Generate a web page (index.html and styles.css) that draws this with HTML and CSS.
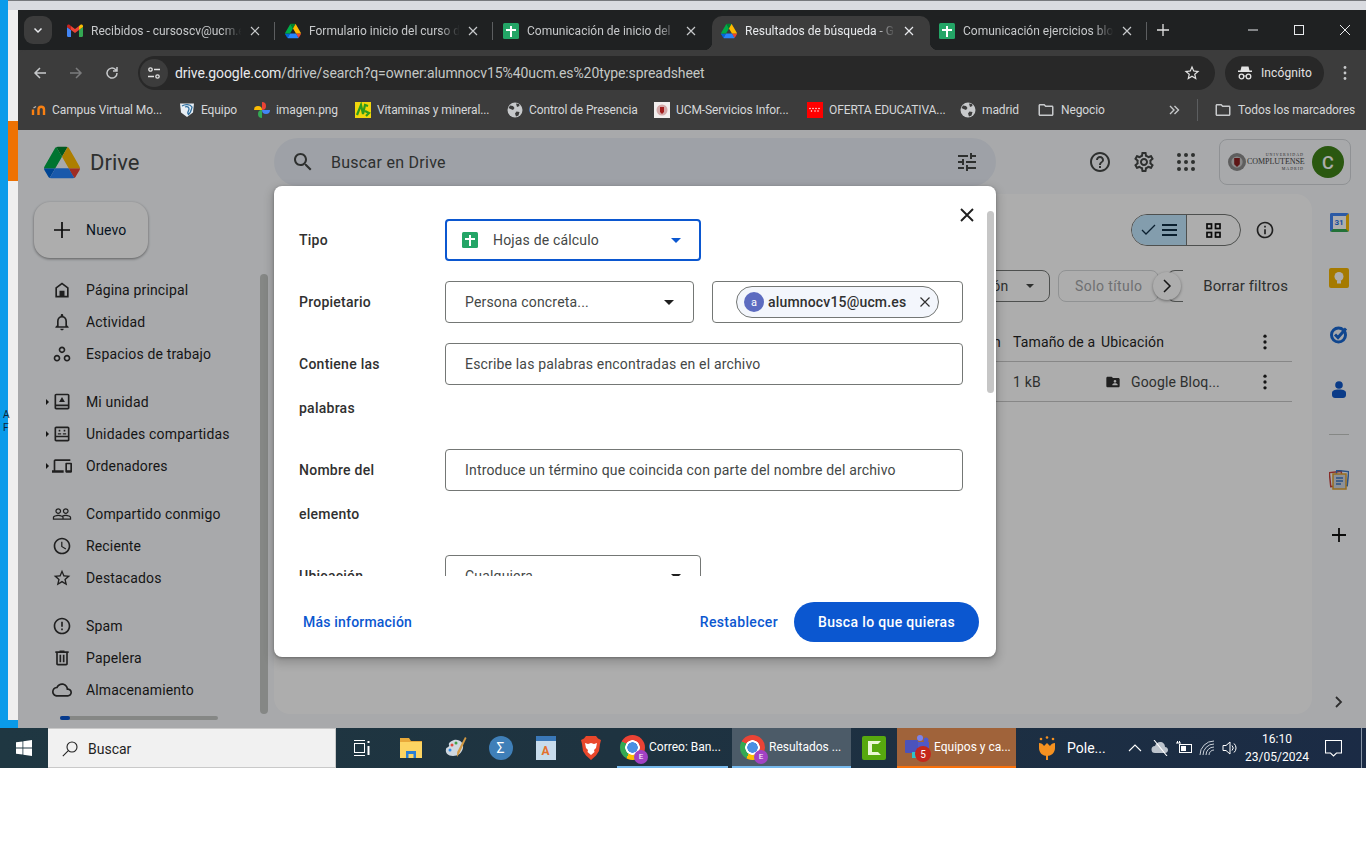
FILE: index.html
```html
<!DOCTYPE html>
<html lang="es">
<head>
    <meta charset="UTF-8">
    <title>Resultados de búsqueda - Google Drive</title>
    <link rel="stylesheet" href="styles.css">
</head>
<body>
    <svg class="defs" width="0" height="0">
        <defs>
            <symbol id="drive" viewBox="0 0 87.3 78">
                <path fill="#0066da" d="m6.6 66.85 3.85 6.65c.8 1.4 1.95 2.5 3.3 3.3l13.75-23.8h-27.5c0 1.55.4 3.1 1.2 4.5z"/>
                <path fill="#00ac47" d="m43.65 25-13.75-23.8c-1.35.8-2.5 1.9-3.3 3.3l-25.4 44a9.06 9.06 0 0 0 -1.2 4.5h27.5z"/>
                <path fill="#ea4335" d="m73.55 76.8c1.35-.8 2.5-1.9 3.3-3.3l1.6-2.75 7.65-13.25c.8-1.4 1.2-2.95 1.2-4.5h-27.502l5.852 11.5z"/>
                <path fill="#00832d" d="m43.65 25 13.75-23.8c-1.35-.8-2.9-1.2-4.5-1.2h-18.5c-1.6 0-3.15.45-4.5 1.2z"/>
                <path fill="#2684fc" d="m59.8 53h-32.3l-13.75 23.8c1.35.8 2.9 1.2 4.5 1.2h50.8c1.6 0 3.15-.45 4.5-1.2z"/>
                <path fill="#ffba00" d="m73.4 26.5-12.7-22c-.8-1.4-1.95-2.5-3.3-3.3l-13.75 23.8 16.15 28h27.45c0-1.55-.4-3.1-1.2-4.5z"/>
            </symbol>
            <symbol id="sheets" viewBox="0 0 16 16">
                <rect width="16" height="16" rx="1.5" fill="#23a566"/>
                <path fill="#fff" d="M7 3h2v3h4v2H9v6H7V8H3V6h4z"/>
            </symbol>
            <symbol id="gmail" viewBox="0 0 16 16">
                <path fill="#4285f4" d="M1 14h3V7L0 4v8.8C0 13.5.5 14 1 14z"/>
                <path fill="#34a853" d="M12 14h3c.5 0 1-.5 1-1.2V4l-4 3z"/>
                <path fill="#ea4335" d="M4 7V3l4 3 4-3v4L8 10z"/>
                <path fill="#fbbc04" d="M12 3v4l4-3V3c0-1.3-1.5-2-2.5-1.2z"/>
                <path fill="#c5221f" d="M0 4l4 3V3L2.5 1.8C1.500 1 0 1.700 0 3z"/>
            </symbol>
            <symbol id="folder" viewBox="0 0 24 24">
                <path fill="currentColor" d="M20 6h-8l-2-2H4c-1.1 0-2 .9-2 2v12c0 1.1.9 2 2 2h16c1.1 0 2-.9 2-2V8c0-1.1-.9-2-2-2zm0 12H4V6h5.17l2 2H20v10z"/>
            </symbol>
            <symbol id="globe" viewBox="0 0 16 16">
                <circle cx="8" cy="8" r="7.5" fill="#c7c9cb"/>
                <path fill="#3c3c3c" d="M3 3.5l3 .5 1.5 2L6 8 3.5 7 1.5 6zM9.5 9.500l3 .5-1 3.5L9 14.5l-1-3zM9 1.5l3 .5.5 2L10 5z"/>
            </symbol>
            <symbol id="tabx" viewBox="0 0 10 10">
                <path d="M1 1l8 8M9 1 1 9" stroke="currentColor" stroke-width="1.2"/>
            </symbol>
        </defs>
    </svg>

    <div class="screen">
        <div class="desktop">
            <div class="peek-window"><div class="peek-orange"></div></div>
            <div class="peek-top"></div>
            <div class="peek-text">A<br>F</div>

            <div class="browser">
                <div class="tabstrip">
                    <div class="tab-menu">
                        <svg width="12" height="12" viewBox="0 0 12 12"><path d="M2.5 4.5 6 8l3.5-3.5" fill="none" stroke="#e8eaed" stroke-width="1.5"/></svg>
                    </div>
                    <div class="tab sep">
                        <svg class="fav" viewBox="0 0 16 16"><use href="#gmail"/></svg>
                        <span class="tab-title">Recibidos - cursoscv@ucm.e</span>
                        <svg class="tab-x" viewBox="0 0 10 10"><use href="#tabx"/></svg>
                    </div>
                    <div class="tab sep">
                        <svg class="fav" viewBox="0 0 16 16"><use href="#drive"/></svg>
                        <span class="tab-title">Formulario inicio del curso d</span>
                        <svg class="tab-x" viewBox="0 0 10 10"><use href="#tabx"/></svg>
                    </div>
                    <div class="tab">
                        <svg class="fav" viewBox="0 0 16 16"><use href="#sheets"/></svg>
                        <span class="tab-title">Comunicación de inicio del</span>
                        <svg class="tab-x" viewBox="0 0 10 10"><use href="#tabx"/></svg>
                    </div>
                    <div class="tab active">
                        <svg class="fav" viewBox="0 0 16 16"><use href="#drive"/></svg>
                        <span class="tab-title">Resultados de búsqueda - G</span>
                        <svg class="tab-x" viewBox="0 0 10 10"><use href="#tabx"/></svg>
                    </div>
                    <div class="tab sep">
                        <svg class="fav" viewBox="0 0 16 16"><use href="#sheets"/></svg>
                        <span class="tab-title">Comunicación ejercicios blo</span>
                        <svg class="tab-x" viewBox="0 0 10 10"><use href="#tabx"/></svg>
                    </div>
                    <div class="tab-new">
                        <svg width="12" height="12" viewBox="0 0 12 12"><path d="M6 0v12M0 6h12" stroke="#e3e3e3" stroke-width="1.3"/></svg>
                    </div>
                    <div class="win-controls">
                        <div class="win-btn"><svg width="12" height="12" viewBox="0 0 12 12"><path d="M1 6h10" stroke="#e8eaed"/></svg></div>
                        <div class="win-btn"><svg width="12" height="12" viewBox="0 0 12 12"><rect x="1.5" y="1.5" width="9" height="9" fill="none" stroke="#e8eaed"/></svg></div>
                        <div class="win-btn"><svg width="12" height="12" viewBox="0 0 12 12"><path d="M1 1l10 10M11 1 1 11" stroke="#e8eaed"/></svg></div>
                    </div>
                </div>

                <div class="toolbar">
                    <div class="tool-btn"><svg width="16" height="16" viewBox="0 0 16 16"><path d="M14 8H3M8 3 3 8l5 5" fill="none" stroke="#c7c9cb" stroke-width="1.5"/></svg></div>
                    <div class="tool-btn"><svg width="16" height="16" viewBox="0 0 16 16"><path d="M2 8h11M8 3l5 5-5 5" fill="none" stroke="#7b7c7d" stroke-width="1.5"/></svg></div>
                    <div class="tool-btn"><svg width="16" height="16" viewBox="0 0 16 16"><path d="M13 8a5 5 0 1 1-1.5-3.500L13 6M13 2v4H9" fill="none" stroke="#c7c9cb" stroke-width="1.5"/></svg></div>
                    <div class="omnibox">
                        <div class="site-info">
                            <svg width="16" height="16" viewBox="0 0 16 16" fill="none" stroke="#e3e3e3" stroke-width="1.3"><circle cx="4.5" cy="4.5" r="1.7"/><path d="M8 4.5h6M2 11.5h6"/><circle cx="11.5" cy="11.5" r="1.7"/></svg>
                        </div>
                        <div class="url"><span class="url-host">drive.google.com</span>/drive/search?q=owner:alumnocv15%40ucm.es%20type:spreadsheet</div>
                        <svg class="url-star" width="18" height="18" viewBox="0 0 24 24"><path fill="#e3e3e3" d="M22 9.24l-7.19-.62L12 2 9.19 8.63 2 9.24l5.46 4.73L5.82 21 12 17.27 18.18 21l-1.63-7.03L22 9.24zM12 15.4l-3.76 2.27 1-4.28-3.32-2.88 4.38-.38L12 6.1l1.71 4.04 4.38.38-3.32 2.88 1 4.28L12 15.4z"/></svg>
                    </div>
                    <div class="incognito">
                        <svg width="16" height="16" viewBox="0 0 16 16"><path fill="#e3e3e3" d="M4.500 1.500h7l1 4H15V7H1V5.500h2.500z"/><circle cx="4.500" cy="11.500" r="2.300" fill="none" stroke="#e3e3e3" stroke-width="1.300"/><circle cx="11.500" cy="11.500" r="2.300" fill="none" stroke="#e3e3e3" stroke-width="1.300"/><path d="M6.800 11h2.400" stroke="#e3e3e3"/></svg>
                        <span>Incógnito</span>
                    </div>
                    <div class="tool-kebab">
                        <svg width="16" height="16" viewBox="0 0 16 16" fill="#c7c9cb"><circle cx="8" cy="2.500" r="1.400"/><circle cx="8" cy="8" r="1.400"/><circle cx="8" cy="13.500" r="1.400"/></svg>
                    </div>
                </div>

                <div class="bookmarks">
                    <div class="bm bm-campus">
                        <svg class="fav" viewBox="0 0 16 16"><path d="M2 13V7.500M7.500 13V7.500a2.700 2.700 0 0 1 5.500 0V13" fill="none" stroke="#f98012" stroke-width="2.400"/><path d="M2.500 6 5 4.500" stroke="#b8b8b8" stroke-width="1.400"/></svg>
                        <span>Campus Virtual Mo...</span>
                    </div>
                    <div class="bm bm-equipo">
                        <svg class="fav" viewBox="0 0 16 16"><path d="M1 1.500h14l-1 9-6 4.500-6-4.500z" fill="#e8eef4"/><path d="M3 4c3-2 8-2 10 1-1 4-1 6-4 8M6 5c2-1 4 0 4 2s-2 3-1 5" fill="none" stroke="#2f6f9f" stroke-width="1.300"/></svg>
                        <span>Equipo</span>
                    </div>
                    <div class="bm bm-imagen">
                        <svg class="fav" viewBox="0 0 16 16"><path fill="#fbbc04" d="M8 8H0a4 4 0 0 1 8 0z"/><path fill="#ea4335" d="M8 8V0a4 4 0 0 1 0 8z"/><path fill="#4285f4" d="M8 8h8a4 4 0 0 1-8 0z"/><path fill="#34a853" d="M8 8v8a4 4 0 0 1 0-8z"/></svg>
                        <span>imagen.png</span>
                    </div>
                    <div class="bm bm-vitaminas">
                        <svg class="fav" viewBox="0 0 16 16"><rect width="16" height="16" fill="#f2d70c"/><path d="M2 13 6 3l2 9 2-9 3 1M10 9l4 2-3 3" fill="none" stroke="#2f9a1c" stroke-width="2.200"/></svg>
                        <span>Vitaminas y mineral...</span>
                    </div>
                    <div class="bm bm-control">
                        <svg class="fav" viewBox="0 0 16 16"><use href="#globe"/></svg>
                        <span>Control de Presencia</span>
                    </div>
                    <div class="bm bm-ucm">
                        <svg class="fav" viewBox="0 0 16 16"><rect width="16" height="16" fill="#f3efee"/><circle cx="8" cy="8" r="5.500" fill="#d4a9a9"/><path d="M6 5h4v5l-2 2-2-2z" fill="#a31d1d"/></svg>
                        <span>UCM-Servicios Infor...</span>
                    </div>
                    <div class="bm bm-oferta">
                        <svg class="fav" viewBox="0 0 16 16"><rect width="16" height="16" fill="#f00"/><path d="M3 6.500h.01M6 6.500h.01M9 6.500h.01M12 6.500h.01M4.500 9h.01M8 9h.01M11 9h.01" stroke="#fff" stroke-width="1.500" stroke-linecap="round"/></svg>
                        <span>OFERTA EDUCATIVA...</span>
                    </div>
                    <div class="bm bm-madrid">
                        <svg class="fav" viewBox="0 0 16 16"><use href="#globe"/></svg>
                        <span>madrid</span>
                    </div>
                    <div class="bm bm-negocio">
                        <svg class="fav folder-ico" viewBox="0 0 24 24"><use href="#folder"/></svg>
                        <span>Negocio</span>
                    </div>
                    <div class="bm-more">
                        <svg width="12" height="12" viewBox="0 0 12 12"><path d="M2 2l4 4-4 4M6.500 2l4 4-4 4" fill="none" stroke="#c7c9cb" stroke-width="1.400"/></svg>
                    </div>
                    <div class="bm-sep"></div>
                    <div class="bm bm-all">
                        <svg class="fav folder-ico" viewBox="0 0 24 24"><use href="#folder"/></svg>
                        <span>Todos los marcadores</span>
                    </div>
                </div>

                <div class="drive">
                    <header class="drive-head">
                        <div class="brand">
                            <svg class="brand-logo" viewBox="0 0 87.3 78"><use href="#drive"/></svg>
                            <span>Drive</span>
                        </div>
                        <div class="searchbox">
                            <svg class="ico24" viewBox="0 0 24 24"><path d="M15.5 14h-.79l-.28-.27C15.41 12.59 16 11.11 16 9.5 16 5.91 13.09 3 9.5 3S3 5.91 3 9.5 5.91 16 9.5 16c1.61 0 3.09-.59 4.23-1.57l.27.28v.79l5 4.99L20.49 19l-4.99-5zm-6 0C7.01 14 5 11.99 5 9.5S7.01 5 9.5 5 14 7.01 14 9.5 11.99 14 9.5 14z"/></svg>
                            <span class="search-text">Buscar en Drive</span>
                            <svg class="ico24" viewBox="0 0 24 24"><path d="M3 17v2h6v-2H3zM3 5v2h10V5H3zm10 16v-2h8v-2h-8v-2h-2v6h2zM7 9v2H3v2h4v2h2V9H7zm14 4v-2H11v2h10zm-6-4h2V7h4V5h-4V3h-2v6z"/></svg>
                        </div>
                        <div class="head-actions">
                            <svg class="ico24" viewBox="0 0 24 24"><path d="M11 18h2v-2h-2v2zm1-16C6.48 2 2 6.48 2 12s4.48 10 10 10 10-4.48 10-10S17.52 2 12 2zm0 18c-4.41 0-8-3.59-8-8s3.59-8 8-8 8 3.59 8 8-3.59 8-8 8zm0-14c-2.21 0-4 1.79-4 4h2c0-1.1.9-2 2-2s2 .9 2 2c0 2-3 1.75-3 5h2c0-2.25 3-2.5 3-5 0-2.21-1.79-4-4-4z"/></svg>
                            <svg class="ico24" viewBox="0 0 24 24"><path d="M19.43 12.98c.04-.32.07-.64.07-.98 0-.34-.03-.66-.07-.98l2.11-1.65c.19-.15.24-.42.12-.64l-2-3.46c-.09-.16-.26-.25-.44-.25-.06 0-.12.01-.17.03l-2.49 1c-.52-.4-1.08-.73-1.69-.98l-.38-2.65C14.46 2.18 14.25 2 14 2h-4c-.25 0-.46.18-.49.42l-.38 2.65c-.61.25-1.17.59-1.69.98l-2.49-1c-.06-.02-.12-.03-.18-.03-.17 0-.34.09-.43.25l-2 3.46c-.13.22-.07.49.12.64l2.11 1.65c-.04.32-.07.65-.07.98 0 .33.03.66.07.98l-2.11 1.65c-.19.15-.24.42-.12.64l2 3.46c.09.16.26.25.44.25.06 0 .12-.01.17-.03l2.49-1c.52.4 1.08.73 1.69.98l.38 2.65c.03.24.24.42.49.42h4c.25 0 .46-.18.49-.42l.38-2.65c.61-.25 1.17-.59 1.69-.98l2.49 1c.06.02.12.03.18.03.17 0 .34-.09.43-.25l2-3.46c.12-.22.07-.49-.12-.64l-2.11-1.65zm-1.98-1.71c.04.31.05.52.05.73 0 .21-.02.43-.05.73l-.14 1.13.89.7 1.08.84-.7 1.21-1.27-.51-1.04-.42-.9.68c-.43.32-.84.56-1.25.73l-1.06.43-.16 1.13-.2 1.35h-1.4l-.19-1.35-.16-1.13-1.06-.43c-.43-.18-.83-.41-1.23-.71l-.91-.7-1.06.43-1.27.51-.7-1.21 1.08-.84.89-.7-.14-1.13c-.03-.31-.05-.54-.05-.74s.02-.43.05-.73l.14-1.13-.89-.7-1.08-.84.7-1.21 1.27.51 1.04.42.9-.68c.43-.32.84-.56 1.25-.73l1.06-.43.16-1.13.2-1.35h1.39l.19 1.35.16 1.13 1.06.43c.43.18.83.41 1.23.71l.91.7 1.06-.43 1.27-.51.7 1.21-1.07.85-.89.7.14 1.13zM12 8c-2.21 0-4 1.79-4 4s1.79 4 4 4 4-1.79 4-4-1.79-4-4-4zm0 6c-1.1 0-2-.9-2-2s.9-2 2-2 2 .9 2 2-.9 2-2 2z"/></svg>
                            <svg class="ico24 ico-apps" viewBox="0 0 24 24"><circle cx="5" cy="5" r="2"/><circle cx="12" cy="5" r="2"/><circle cx="19" cy="5" r="2"/><circle cx="5" cy="12" r="2"/><circle cx="12" cy="12" r="2"/><circle cx="19" cy="12" r="2"/><circle cx="5" cy="19" r="2"/><circle cx="12" cy="19" r="2"/><circle cx="19" cy="19" r="2"/></svg>
                            <div class="org-box">
                                <svg class="crest" viewBox="0 0 16 16"><circle cx="8" cy="8" r="8" fill="#8b8b8b"/><circle cx="8" cy="8" r="5" fill="#c9c9c9"/><path d="M5.500 4.500h5V10L8 12.500 5.500 10z" fill="#8a1f1f"/></svg>
                                <div class="org-name">
                                    <span class="org-small">UNIVERSIDAD</span>
                                    <span class="org-big">COMPLUTENSE</span>
                                    <span class="org-small">MADRID</span>
                                </div>
                                <div class="avatar">C</div>
                            </div>
                        </div>
                    </header>

                    <div class="drive-body">
                        <aside class="sidebar">
                            <div class="new-btn">
                                <svg width="16" height="16" viewBox="0 0 16 16"><path d="M8 0v16M0 8h16" stroke="#111" stroke-width="1.700"/></svg>
                                <span>Nuevo</span>
                            </div>
                            <nav class="nav-group">
                                <div class="nav-row"><svg class="ico20" viewBox="0 0 24 24"><path d="M12 3 4 9v12h16V9l-8-6zm6 16h-3v-6H9v6H6v-9.1l6-4.5 6 4.5V19z"/></svg><span>Página principal</span></div>
                                <div class="nav-row"><svg class="ico20" viewBox="0 0 24 24"><path d="M12 22c1.1 0 2-.9 2-2h-4c0 1.1.9 2 2 2zm6-6v-5c0-3.07-1.63-5.64-4.5-6.32V4c0-.83-.67-1.5-1.5-1.5s-1.5.67-1.5 1.5v.68C7.64 5.36 6 7.92 6 11v5l-2 2v1h16v-1l-2-2zm-2 1H8v-6c0-2.48 1.51-4.5 4-4.5s4 2.02 4 4.5v6z"/></svg><span>Actividad</span></div>
                                <div class="nav-row"><svg class="ico20" viewBox="0 0 24 24"><path d="M6 13c-2.2 0-4 1.8-4 4s1.8 4 4 4 4-1.8 4-4-1.8-4-4-4zm0 6c-1.1 0-2-.9-2-2s.9-2 2-2 2 .9 2 2-.9 2-2 2zm6-16C9.8 3 8 4.8 8 7s1.8 4 4 4 4-1.8 4-4-1.8-4-4-4zm0 6c-1.1 0-2-.9-2-2s.9-2 2-2 2 .9 2 2-.9 2-2 2zm6 4c-2.2 0-4 1.8-4 4s1.8 4 4 4 4-1.8 4-4-1.8-4-4-4zm0 6c-1.1 0-2-.9-2-2s.9-2 2-2 2 .9 2 2-.9 2-2 2z"/></svg><span>Espacios de trabajo</span></div>
                            </nav>
                            <nav class="nav-group">
                                <div class="nav-row"><i class="caret-r"></i><svg class="ico20" viewBox="0 0 24 24"><path d="M5 2h14c1.1 0 2 .9 2 2v15c0 1.1-.9 2-2 2H5c-1.1 0-2-.9-2-2V4c0-1.1.9-2 2-2zm0 2v11h14V4H5zm0 13v2h14v-2H5zm7-11 3.5 6h-7z"/></svg><span>Mi unidad</span></div>
                                <div class="nav-row"><i class="caret-r"></i><svg class="ico20" viewBox="0 0 24 24"><path d="M5 3h14c1.1 0 2 .9 2 2v14c0 1.1-.9 2-2 2H5c-1.1 0-2-.9-2-2V5c0-1.1.9-2 2-2zm0 2v9h14V5H5zm0 11v3h14v-3H5zM8 7h2v2H8zm6 0h2v2h-2zm-7 4h4v1.5H7zm6 0h4v1.5h-4z"/></svg><span>Unidades compartidas</span></div>
                                <div class="nav-row"><i class="caret-r"></i><svg class="ico20" viewBox="0 0 24 24"><path d="M4 6h18V4H4c-1.1 0-2 .9-2 2v11H0v3h14v-3H4V6zm19 2h-6c-.55 0-1 .45-1 1v10c0 .55.45 1 1 1h6c.55 0 1-.45 1-1V9c0-.55-.45-1-1-1zm-1 9h-4v-7h4v7z"/></svg><span>Ordenadores</span></div>
                            </nav>
                            <nav class="nav-group">
                                <div class="nav-row"><svg class="ico20" viewBox="0 0 24 24"><path d="M16.5 13c-1.2 0-3.07.34-4.5 1-1.43-.67-3.3-1-4.5-1C5.33 13 1 14.08 1 16.25V19h22v-2.75c0-2.17-4.33-3.25-6.5-3.25zm-4 4.5h-10v-1.25c0-.54 2.56-1.75 5-1.75s5 1.21 5 1.75v1.25zm9 0H14v-1.25c0-.46-.2-.86-.52-1.22.88-.3 1.96-.53 3.02-.53 2.44 0 5 1.21 5 1.75v1.25zM7.5 12c1.93 0 3.5-1.57 3.5-3.5S9.43 5 7.5 5 4 6.57 4 8.5 5.57 12 7.5 12zm0-5.5c1.1 0 2 .9 2 2s-.9 2-2 2-2-.9-2-2 .9-2 2-2zm9 5.5c1.93 0 3.5-1.57 3.5-3.5S18.43 5 16.5 5 13 6.57 13 8.5s1.57 3.5 3.5 3.5zm0-5.5c1.1 0 2 .9 2 2s-.9 2-2 2-2-.9-2-2 .9-2 2-2z"/></svg><span>Compartido conmigo</span></div>
                                <div class="nav-row"><svg class="ico20" viewBox="0 0 24 24"><path d="M11.99 2C6.47 2 2 6.48 2 12s4.47 10 9.99 10C17.52 22 22 17.52 22 12S17.52 2 11.99 2zM12 20c-4.42 0-8-3.58-8-8s3.58-8 8-8 8 3.58 8 8-3.58 8-8 8zm.5-13H11v6l5.25 3.15.75-1.23-4.5-2.67z"/></svg><span>Reciente</span></div>
                                <div class="nav-row"><svg class="ico20" viewBox="0 0 24 24"><path d="M22 9.24l-7.19-.62L12 2 9.19 8.63 2 9.24l5.46 4.73L5.82 21 12 17.27 18.18 21l-1.63-7.03L22 9.24zM12 15.4l-3.76 2.27 1-4.28-3.32-2.88 4.38-.38L12 6.1l1.71 4.04 4.38.38-3.32 2.88 1 4.28L12 15.4z"/></svg><span>Destacados</span></div>
                            </nav>
                            <nav class="nav-group">
                                <div class="nav-row"><svg class="ico20" viewBox="0 0 24 24"><path d="M11 15h2v2h-2zm0-8h2v6h-2zm.99-5C6.47 2 2 6.48 2 12s4.47 10 9.99 10C17.52 22 22 17.52 22 12S17.52 2 11.99 2zM12 20c-4.42 0-8-3.58-8-8s3.58-8 8-8 8 3.58 8 8-3.58 8-8 8z"/></svg><span>Spam</span></div>
                                <div class="nav-row"><svg class="ico20" viewBox="0 0 24 24"><path d="M15 4V3H9v1H4v2h1v13c0 1.1.9 2 2 2h10c1.1 0 2-.9 2-2V6h1V4h-5zm2 15H7V6h10v13zM9 8h2v9H9zm4 0h2v9h-2z"/></svg><span>Papelera</span></div>
                                <div class="nav-row"><svg class="ico20" viewBox="0 0 24 24"><path d="M19.35 10.04C18.67 6.59 15.64 4 12 4 9.11 4 6.6 5.64 5.35 8.04 2.34 8.36 0 10.91 0 14c0 3.31 2.69 6 6 6h13c2.76 0 5-2.24 5-5 0-2.64-2.05-4.78-4.65-4.96zM19 18H6c-2.21 0-4-1.79-4-4s1.79-4 4-4h.71C7.37 7.69 9.48 6 12 6c3.04 0 5.5 2.46 5.5 5.5v.5H19c1.66 0 3 1.34 3 3s-1.34 3-3 3z"/></svg><span>Almacenamiento</span></div>
                            </nav>
                            <div class="storage"><div class="storage-used"></div></div>
                            <div class="side-scroll"></div>
                        </aside>

                        <main class="panel">
                            <div class="view-row">
                                <div class="view-toggle">
                                    <div class="view-list">
                                        <svg width="16" height="12" viewBox="0 0 16 12"><path d="M1 6l4 4 9-9" fill="none" stroke="#0f2f46" stroke-width="1.300"/></svg>
                                        <svg width="15" height="12" viewBox="0 0 15 12" fill="#0f2f46"><path d="M0 0h15v2H0zM0 5h15v2H0zM0 10h15v2H0z"/></svg>
                                    </div>
                                    <div class="view-grid">
                                        <svg width="15" height="15" viewBox="0 0 15 15" fill="none" stroke="#111" stroke-width="1.700"><rect x="1" y="1" width="4.500" height="4.500"/><rect x="9.500" y="1" width="4.500" height="4.500"/><rect x="1" y="9.500" width="4.500" height="4.500"/><rect x="9.500" y="9.500" width="4.500" height="4.500"/></svg>
                                    </div>
                                </div>
                                <svg class="ico20 info-ico" viewBox="0 0 24 24"><path d="M11 7h2v2h-2zm0 4h2v6h-2zm1-9C6.48 2 2 6.48 2 12s4.48 10 10 10 10-4.48 10-10S17.52 2 12 2zm0 18c-4.41 0-8-3.59-8-8s3.59-8 8-8 8 3.59 8 8-3.59 8-8 8z"/></svg>
                            </div>
                            <div class="filter-row">
                                <div class="chips">
                                    <div class="chip chip-loc"><span>Ubicación</span><i class="caret-d"></i></div>
                                    <div class="chip chip-off">Solo título</div>
                                    <div class="chip chip-cut"></div>
                                    <div class="chip-next">
                                        <svg width="10" height="14" viewBox="0 0 10 14"><path d="M2 1l6 6-6 6" fill="none" stroke="#1f1f1f" stroke-width="1.500"/></svg>
                                    </div>
                                </div>
                                <div class="clear-filters">Borrar filtros</div>
                            </div>
                            <div class="results">
                                <div class="res-row res-head">
                                    <span class="res-date">Última modificación</span>
                                    <span>Tamaño de a</span>
                                    <span>Ubicación</span>
                                    <svg class="ico20 kebab" viewBox="0 0 24 24"><circle cx="12" cy="5" r="2"/><circle cx="12" cy="12" r="2"/><circle cx="12" cy="19" r="2"/></svg>
                                </div>
                                <div class="res-row">
                                    <span class="res-date"></span>
                                    <span class="res-muted">1 kB</span>
                                    <span class="res-loc">
                                        <svg width="16" height="16" viewBox="0 0 24 24" fill="#303030"><path d="M20 6h-8l-2-2H4c-1.1 0-2 .9-2 2v12c0 1.1.9 2 2 2h16c1.1 0 2-.9 2-2V8c0-1.1-.9-2-2-2zm-5 3c1.1 0 2 .9 2 2s-.9 2-2 2-2-.9-2-2 .9-2 2-2zm4 8h-8v-1c0-1.33 2.67-2 4-2s4 .67 4 2v1z"/></svg>
                                        Google Bloq...
                                    </span>
                                    <svg class="ico20 kebab" viewBox="0 0 24 24"><circle cx="12" cy="5" r="2"/><circle cx="12" cy="12" r="2"/><circle cx="12" cy="19" r="2"/></svg>
                                </div>
                            </div>
                        </main>

                        <aside class="rail">
                            <div class="rail-item">
                                <div class="cal-ico"><span>31</span></div>
                            </div>
                            <div class="rail-item">
                                <svg width="20" height="20" viewBox="0 0 20 20"><rect width="20" height="20" rx="2" fill="#f4b400"/><circle cx="10" cy="8.500" r="4.500" fill="#fff"/><rect x="8" y="12.500" width="4" height="3" fill="#fff"/></svg>
                            </div>
                            <div class="rail-item">
                                <svg width="20" height="20" viewBox="0 0 20 20" fill="none"><circle cx="9.500" cy="11" r="7" stroke="#1967d2" stroke-width="3"/><path d="M6 10.500l3 3 8-9" stroke="#1967d2" stroke-width="3"/></svg>
                            </div>
                            <div class="rail-item">
                                <svg width="16" height="20" viewBox="0 0 16 20" fill="#0f57c9"><circle cx="8" cy="5" r="3.800"/><path d="M1 13c0-2 2-3.500 7-3.500s7 1.500 7 3.500v2c0 2-1.500 3-3 3H4c-1.500 0-3-1-3-3z"/></svg>
                            </div>
                            <div class="rail-sep"></div>
                            <div class="rail-item">
                                <svg width="20" height="20" viewBox="0 0 20 20" fill="none"><rect x="1" y="2" width="12" height="14" stroke="#c9403a" stroke-width="1.500" transform="rotate(-6 7 9)"/><rect x="7" y="1" width="12" height="14" stroke="#3d77c4" stroke-width="1.500" transform="rotate(6 13 8)"/><rect x="4" y="4" width="13" height="15" fill="#cfd6e2" stroke="#dfa02c" stroke-width="1.500"/><path d="M7 8h7M7 11h7M7 14h5" stroke="#3d77c4" stroke-width="1.300"/></svg>
                            </div>
                            <div class="rail-item rail-add">
                                <svg width="14" height="14" viewBox="0 0 14 14"><path d="M7 0v14M0 7h14" stroke="#111" stroke-width="1.800"/></svg>
                            </div>
                            <div class="rail-toggle">
                                <svg width="10" height="12" viewBox="0 0 10 12"><path d="M2 1l5 5-5 5" fill="none" stroke="#444" stroke-width="1.800"/></svg>
                            </div>
                        </aside>
                    </div>

                    <div class="scrim"></div>

                    <section class="dialog">
                        <div class="dialog-close">
                            <svg width="14" height="14" viewBox="0 0 14 14"><path d="M1 1l12 12M13 1 1 13" stroke="#1f1f1f" stroke-width="1.900"/></svg>
                        </div>
                        <div class="dialog-scroll"></div>
                        <div class="dialog-body">
                            <div class="form-label">Tipo</div>
                            <div class="field select select-focus">
                                <svg class="fav" viewBox="0 0 16 16"><use href="#sheets"/></svg>
                                <span class="select-text">Hojas de cálculo</span>
                                <i class="caret-d caret-blue"></i>
                            </div>

                            <div class="form-label">Propietario</div>
                            <div class="owner-row">
                                <div class="field select select-owner">
                                    <span class="select-text">Persona concreta...</span>
                                    <i class="caret-d caret-dark"></i>
                                </div>
                                <div class="field owner-chip-box">
                                    <div class="owner-chip">
                                        <span class="owner-avatar">a</span>
                                        <span class="owner-mail">alumnocv15@ucm.es</span>
                                        <svg width="10" height="10" viewBox="0 0 10 10"><path d="M.5.5l9 9M9.500.5l-9 9" stroke="#303030" stroke-width="1.200"/></svg>
                                    </div>
                                </div>
                            </div>

                            <div class="form-label">Contiene las<br>palabras</div>
                            <div class="field">Escribe las palabras encontradas en el archivo</div>

                            <div class="form-label">Nombre del<br>elemento</div>
                            <div class="field">Introduce un término que coincida con parte del nombre del archivo</div>

                            <div class="form-label">Ubicación</div>
                            <div class="field select select-wide">
                                <span class="select-text">Cualquiera</span>
                                <i class="caret-d caret-dark"></i>
                            </div>
                        </div>
                        <div class="dialog-foot">
                            <a class="foot-link">Más información</a>
                            <a class="foot-link foot-reset">Restablecer</a>
                            <div class="foot-btn">Busca lo que quieras</div>
                        </div>
                    </section>
                </div>
            </div>
        </div>

        <footer class="taskbar">
            <div class="start">
                <svg width="16" height="16" viewBox="0 0 16 16" fill="#fff"><path d="M0 2.300 6.500 1.400v6.200H0zM7.300 1.300 16 0v7.600H7.300zM0 8.400h6.500v6.200L0 13.700zM7.300 8.400H16V16l-8.700-1.200z"/></svg>
            </div>
            <div class="task-search">
                <svg width="16" height="16" viewBox="0 0 16 16" fill="none" stroke="#222" stroke-width="1.100"><circle cx="10" cy="6" r="5"/><path d="M6.300 9.700.8 15.200"/></svg>
                <span>Buscar</span>
            </div>
            <div class="task-slot slot-view">
                <svg width="16" height="16" viewBox="0 0 16 16" fill="none" stroke="#fff"><path d="M0 .5h11M0 15.500h11"/><rect x=".5" y="3.500" width="10" height="9"/><path d="M14.500 1v2M14.500 6v9" stroke-width="2"/></svg>
            </div>
            <div class="task-slot">
                <svg width="22" height="20" viewBox="0 0 22 20"><path fill="#e8a93a" d="M0 0h9l2 3h11v3H0z"/><path fill="#fcd462" d="M0 4h22v16H0z"/><path fill="#2a7fd4" d="M6 13h10v7h-2.500v-4h-5v4H6z"/></svg>
            </div>
            <div class="task-slot">
                <svg width="22" height="22" viewBox="0 0 22 22"><path fill="#cfd8e0" d="M9 3c6-1 10 3 9 8s-5 8-10 8-8-3-7-7c.5-2 4-2 3-4s2-4 5-5z"/><circle cx="7" cy="8" r="1.500" fill="#e0483e"/><circle cx="11" cy="6" r="1.500" fill="#43a047"/><circle cx="5" cy="13" r="1.500" fill="#2e8ae6"/><path d="M20 0l1.500 1-7 15-2.500 4 .2-5z" fill="#d39a44"/></svg>
            </div>
            <div class="task-slot">
                <div class="sigma"><span>Σ</span></div>
            </div>
            <div class="task-slot">
                <div class="doc-ico"><span>A</span></div>
            </div>
            <div class="task-slot">
                <svg width="20" height="24" viewBox="0 0 20 24"><path fill="#e9472b" d="M5 0h10l2 2.500L20 4l-1 4-1 7-3 4.500L10 24l-5-4.500L2 15 1 8 0 4l3-1.500z"/><path fill="#fff" d="M4 7l3 1 3-1 3 1 3-1-1 5-2 2 .5 2L10 19l-3.500-3 .5-2-2-2z"/></svg>
            </div>
            <div class="task-app app-running">
                <div class="chrome"><span class="profile">E</span></div>
                <span>Correo: Ban...</span>
            </div>
            <div class="task-app app-active">
                <div class="chrome"><span class="profile">E</span></div>
                <span>Resultados ...</span>
            </div>
            <div class="task-slot slot-cam">
                <svg width="24" height="24" viewBox="0 0 24 24"><rect width="24" height="24" rx="2" fill="#57a90f"/><path fill="#eaf7d6" d="M6 5h13l-3 3h-6v8h6l3 3H6z"/></svg>
            </div>
            <div class="task-app app-teams">
                <div class="teams">
                    <svg width="25" height="26" viewBox="0 0 25 26"><circle cx="15" cy="4" r="3" fill="#7b83eb"/><circle cx="21" cy="6" r="2.500" fill="#5059c9"/><path fill="#5059c9" d="M12 8h12v8h-12z"/><rect y="6" width="13" height="13" rx="1" fill="#4b53bc"/><path fill="#2fc3c8" d="M7 18h6v6H7z"/></svg>
                    <span class="teams-badge">5</span>
                </div>
                <span>Equipos y ca...</span>
            </div>
            <div class="task-poll">
                <svg width="20" height="24" viewBox="0 0 20 24"><path fill="#f59120" d="M2 7c2 0 4 1 5 3l3-3 3 3c1-2 3-3 5-3v5c0 5-4 8-8 8s-8-3-8-8z"/><rect x="9" y="19" width="2" height="5" fill="#f59120"/><circle cx="4" cy="3" r="1.300" fill="#f59120"/><circle cx="10" cy="1.500" r="1.300" fill="#f59120"/><circle cx="16" cy="3" r="1.300" fill="#f59120"/></svg>
                <span>Pole...</span>
            </div>
            <div class="tray tray-a"><svg width="14" height="8" viewBox="0 0 14 8"><path d="M1 7l6-6 6 6" fill="none" stroke="#fff" stroke-width="1.100"/></svg></div>
            <div class="tray tray-b"><svg width="18" height="16" viewBox="0 0 18 16"><path fill="#bcc3cc" d="M4 13a3.500 3.500 0 0 1 0-7c1-3 3-4 5-4 3 0 5 2 5 5 2 0 3 1.500 3 3s-1 3-3 3z"/><path d="M3 0l13 16" stroke="#fff" stroke-width="1.100"/></svg></div>
            <div class="tray tray-c"><svg width="16" height="14" viewBox="0 0 16 14" fill="none" stroke="#fff"><rect x="3.500" y="3.500" width="12" height="8"/><rect x="5" y="5" width="5" height="5" fill="#fff" stroke="none"/><path d="M0 2h5M1.500 0v2M3.500 0v2"/></svg></div>
            <div class="tray tray-d"><svg width="16" height="16" viewBox="0 0 16 16" fill="none" stroke="#c9d0d8"><path d="M1 15A14 14 0 0 1 15 1M4 15A11 11 0 0 1 15 4M7 15a8 8 0 0 1 8-8M10 15a5 5 0 0 1 5-5"/></svg></div>
            <div class="tray tray-e"><svg width="16" height="16" viewBox="0 0 16 16" fill="none" stroke="#fff"><path d="M1 5.500h3L8 2v12L4 10.500H1zM10 5.500a3.500 3.500 0 0 1 0 5M12 3.500a6 6 0 0 1 0 9"/></svg></div>
            <div class="clock">
                <span>16:10</span>
                <span>23/05/2024</span>
            </div>
            <div class="tray tray-note"><svg width="17" height="17" viewBox="0 0 17 17" fill="none" stroke="#fff" stroke-width="1.100"><path d="M.5.500h16v12.500h-5l-3 3-3-3h-5z"/></svg></div>
            <div class="show-desktop"></div>
        </footer>
        <div class="below"></div>
    </div>
</body>
</html>
```

FILE: styles.css
```css
* {
    box-sizing: border-box;
}

body {
    margin: 0;
    background-color: #ffffff;
    font-family: Roboto, "Liberation Sans", sans-serif;
    font-size: 14px;
    color: #1f1f1f;
}

.defs {
    display: block;
    height: 0;
}

.screen {
    display: flex;
    flex-direction: column;
    width: 1366px;
    height: 864px;
    overflow: hidden;
}

.desktop {
    position: relative;
    height: 728px;
    background-color: #0a9bea;
}

.peek-window {
    position: absolute;
    left: 8px;
    top: 0;
    width: 12px;
    height: 720px;
    background-color: #efefef;
}

.peek-orange {
    margin-top: 121px;
    height: 60px;
    background-color: #ee7203;
}

.peek-top {
    position: absolute;
    left: 8px;
    right: 0;
    top: 0;
    height: 10px;
    border-top: 1px solid #77797d;
    background-color: #d9dbe0;
}

.peek-text {
    position: absolute;
    left: 3px;
    top: 408px;
    font-size: 10px;
    line-height: 13px;
    color: #10243a;
}

/* browser window */
.browser {
    position: absolute;
    left: 18px;
    top: 10px;
    right: 0;
    bottom: 0;
    display: flex;
    flex-direction: column;
    background-color: #3c3c3c;
}

.tabstrip {
    display: flex;
    align-items: flex-end;
    height: 40px;
    padding-left: 6px;
    background-color: #1f2122;
}

.tab-menu {
    display: flex;
    align-items: center;
    justify-content: center;
    align-self: flex-start;
    width: 28px;
    height: 28px;
    margin-top: 6px;
    margin-right: 6px;
    border-radius: 9px;
    background-color: #3c3c3c;
}

.tab {
    position: relative;
    display: flex;
    align-items: center;
    width: 218px;
    height: 34px;
    padding: 0 13px 4px 9px;
    font-size: 12px;
    color: #c7c9cb;
}

.tab.sep::after {
    content: "";
    position: absolute;
    right: 1px;
    top: 6px;
    height: 18px;
    border-right: 1px solid #5c5e60;
}

.tab.active {
    border-radius: 10px 10px 0 0;
    background-color: #3c3c3c;
    color: #e8eaed;
}

.tab.active::before,
.tab.active::after {
    content: "";
    position: absolute;
    bottom: 0;
    width: 8px;
    height: 8px;
}

.tab.active::before {
    left: -8px;
    background: radial-gradient(circle at 0 0, transparent 8px, #3c3c3c 8.5px);
}

.tab.active::after {
    right: -8px;
    background: radial-gradient(circle at 100% 0, transparent 8px, #3c3c3c 8.5px);
}

.fav {
    flex: none;
    width: 16px;
    height: 16px;
}

.tab-title {
    flex: 1;
    min-width: 0;
    margin: 0 4px 0 8px;
    white-space: nowrap;
    -webkit-mask-image: linear-gradient(to right, #000 86%, transparent 99%);
    mask-image: linear-gradient(to right, #000 86%, transparent 99%);
}

.tab-x {
    flex: none;
    width: 10px;
    height: 10px;
    margin: 0 3px;
}

.tab-new {
    display: flex;
    align-items: center;
    justify-content: center;
    width: 30px;
    height: 34px;
    padding-bottom: 6px;
}

.win-controls {
    display: flex;
    margin-left: auto;
    align-self: stretch;
}

.win-btn {
    display: flex;
    align-items: center;
    justify-content: center;
    width: 46px;
    padding-left: 4px;
}

.toolbar {
    display: flex;
    align-items: center;
    height: 46px;
    padding: 0 0 0 4px;
    border-radius: 8px 8px 0 0;
    background-color: #3c3c3c;
}

.tool-btn {
    display: flex;
    align-items: center;
    justify-content: center;
    width: 36px;
    height: 34px;
}

.omnibox {
    display: flex;
    align-items: center;
    width: 1077px;
    height: 34px;
    margin-left: 8px;
    padding: 0 14px 0 2px;
    border-radius: 17px;
    background-color: #282828;
}

.site-info {
    display: flex;
    align-items: center;
    justify-content: center;
    width: 28px;
    height: 28px;
    border-radius: 50%;
    background-color: #3c3c3c;
}

.url {
    flex: 1;
    margin-left: 7px;
    font-size: 14px;
    letter-spacing: -.09px;
    color: #c4c7c5;
    white-space: nowrap;
}

.url-host {
    color: #e8eaed;
}

.url-star {
    flex: none;
}

.incognito {
    display: flex;
    align-items: center;
    gap: 8px;
    width: 99px;
    height: 34px;
    margin-left: 10px;
    padding-left: 12px;
    border-radius: 17px;
    background-color: #282828;
    font-size: 12px;
    letter-spacing: .1px;
    color: #e3e3e3;
}

.tool-kebab {
    display: flex;
    justify-content: center;
    width: 42px;
}

.bookmarks {
    display: flex;
    align-items: center;
    height: 34px;
    padding: 0 0 6px 13px;
    font-size: 12px;
    letter-spacing: -.1px;
    color: #d5d7d9;
    white-space: nowrap;
}

.bm {
    display: flex;
    align-items: center;
    gap: 6px;
    flex: none;
}

.bm-campus { width: 148px; gap: 5px; }
.bm-equipo { width: 75px; }
.bm-imagen { width: 101px; }
.bm-vitaminas { width: 152px; }
.bm-control { width: 147px; }
.bm-ucm { width: 153px; }
.bm-oferta { width: 153px; }
.bm-madrid { width: 77px; }
.bm-negocio { width: 131px; }

.folder-ico {
    width: 18px;
    height: 18px;
    color: #c7c9cb;
}

.bm-more {
    display: flex;
    width: 17px;
}

.bm-sep {
    width: 1px;
    height: 22px;
    margin: 0 16px 0 12px;
    background-color: #5c5e60;
}

/* drive page */
.drive {
    position: relative;
    flex: 1;
    display: flex;
    flex-direction: column;
    min-height: 0;
    background-color: #f8fafd;
    letter-spacing: .15px;
}

.drive-head {
    display: flex;
    align-items: center;
    flex: none;
    height: 64px;
}

.brand {
    display: flex;
    align-items: center;
    gap: 10px;
    width: 256px;
    padding-left: 26px;
    font-size: 22px;
    letter-spacing: 0;
    color: #444746;
}

.brand-logo {
    width: 36px;
    height: 33px;
}

.searchbox {
    display: flex;
    align-items: center;
    width: 722px;
    height: 48px;
    padding: 0 17px;
    border-radius: 24px;
    background-color: #e9eef6;
    font-size: 16px;
    letter-spacing: .27px;
    color: #444746;
}

.search-text {
    flex: 1;
    margin-left: 16px;
}

.ico24 {
    flex: none;
    width: 24px;
    height: 24px;
    fill: #444746;
}

.ico-apps {
    margin-left: -2px;
}

.ico20 {
    flex: none;
    width: 20px;
    height: 20px;
    fill: #303030;
}

.head-actions {
    display: flex;
    align-items: center;
    gap: 20px;
    margin-left: auto;
    padding-right: 15px;
}

.org-box {
    display: flex;
    align-items: center;
    width: 132px;
    height: 46px;
    margin-left: 1px;
    padding: 0 6px 0 8px;
    border: 1px solid #d3d6da;
    border-radius: 8px;
}

.crest {
    flex: none;
    width: 18px;
    height: 18px;
}

.org-name {
    display: flex;
    flex-direction: column;
    width: 57px;
    margin-left: 1px;
    font-family: "Liberation Serif", serif;
    color: #444;
}

.org-small {
    font-size: 4px;
    line-height: 6px;
    letter-spacing: 1px;
    text-align: right;
}

.org-big {
    font-size: 8px;
    line-height: 8px;
    letter-spacing: -.05px;
}

.avatar {
    display: flex;
    align-items: center;
    justify-content: center;
    width: 32px;
    height: 32px;
    margin-left: auto;
    border-radius: 50%;
    background-color: #3e8219;
    font-size: 18px;
    font-weight: 500;
    color: #ffffff;
}

.drive-body {
    flex: 1;
    display: flex;
    min-height: 0;
}

.sidebar {
    position: relative;
    flex: none;
    width: 256px;
    padding-top: 8px;
}

.new-btn {
    display: flex;
    align-items: center;
    gap: 16px;
    width: 114px;
    height: 56px;
    margin: 0 0 16px 16px;
    padding-left: 20px;
    border-radius: 16px;
    background-color: #ffffff;
    box-shadow: 0 1px 3px rgba(0, 0, 0, .45);
    color: #0c1d33;
}

.nav-group {
    margin-bottom: 16px;
}

.nav-row {
    display: flex;
    align-items: center;
    gap: 14px;
    height: 32px;
    padding-left: 34px;
    color: #1f1f1f;
}

.caret-r {
    flex: none;
    width: 0;
    height: 0;
    margin: 0 -11px 0 -6px;
    border-left: 3px solid #1f1f1f;
    border-top: 3px solid transparent;
    border-bottom: 3px solid transparent;
}

.storage {
    width: 158px;
    height: 4px;
    margin: -6px 0 0 42px;
    border-radius: 2px;
    background-color: #c4c7c5;
}

.storage-used {
    width: 10px;
    height: 4px;
    border-radius: 2px;
    background-color: #0b57d0;
}

.side-scroll {
    position: absolute;
    left: 242px;
    top: 80px;
    width: 8px;
    height: 440px;
    border-radius: 4px;
    background-color: #c4c7c5;
}

.panel {
    flex: none;
    width: 1038px;
    height: 520px;
    padding-top: 20px;
    border-radius: 16px;
    background-color: #ffffff;
}

.view-row {
    display: flex;
    justify-content: flex-end;
    align-items: center;
    gap: 14px;
    padding-right: 37px;
}

.view-toggle {
    display: flex;
    width: 110px;
    height: 32px;
    border: 1px solid #747775;
    border-radius: 16px;
    overflow: hidden;
}

.view-list {
    display: flex;
    align-items: center;
    justify-content: center;
    gap: 5px;
    width: 55px;
    border-right: 1px solid #747775;
    background-color: #c2e7ff;
}

.view-grid {
    flex: 1;
    display: flex;
    align-items: center;
    justify-content: center;
}

.filter-row {
    display: flex;
    justify-content: flex-end;
    align-items: center;
    margin-top: 24px;
    padding-right: 24px;
}

.chips {
    position: relative;
    display: flex;
    gap: 8px;
    margin-right: 20px;
}

.chip {
    display: flex;
    align-items: center;
    height: 32px;
    border: 1px solid #747775;
    border-radius: 8px;
    color: #444746;
}

.chip-loc {
    justify-content: space-between;
    width: 120px;
    padding: 0 15px 0 14px;
}

.chip-off {
    justify-content: center;
    width: 101px;
    border-color: #d5d7d9;
    letter-spacing: .4px;
    color: #a3a5a8;
}

.chip-cut {
    width: 16px;
    border-right: 0;
    border-radius: 8px 0 0 8px;
}

.chip-next {
    position: absolute;
    right: 2px;
    top: 2px;
    display: flex;
    align-items: center;
    justify-content: center;
    width: 28px;
    height: 28px;
    border-radius: 50%;
    background-color: #ffffff;
    box-shadow: 0 1px 3px rgba(0, 0, 0, .4);
}

.clear-filters {
    font-size: 15px;
    letter-spacing: .1px;
    color: #444746;
}

.caret-d {
    flex: none;
    width: 0;
    height: 0;
    border-left: 5px solid transparent;
    border-right: 5px solid transparent;
    border-top: 5px solid #444746;
}

.chip-loc .caret-d {
    border-left-width: 4px;
    border-right-width: 4px;
    border-top-width: 4px;
}

.caret-blue {
    border-top-color: #0b57d0;
}

.caret-dark {
    border-top-color: #1f1f1f;
}

.results {
    width: 1018px;
    margin-top: 20px;
}

.res-row {
    display: grid;
    grid-template-columns: 739px 88px 144px 40px;
    align-items: center;
    height: 40px;
    border-bottom: 1px solid #c7c7c7;
}

.res-head {
    color: #1f1f1f;
}

.res-date {
    padding-right: 12px;
    text-align: right;
}

.res-muted {
    color: #444746;
}

.res-loc {
    display: flex;
    align-items: center;
    gap: 10px;
    padding-left: 4px;
    color: #444746;
}

.kebab {
    justify-self: center;
    fill: #1f1f1f;
}

.rail {
    flex: 1;
    display: flex;
    flex-direction: column;
    align-items: center;
}

.rail-item {
    display: flex;
    align-items: center;
    justify-content: center;
    flex: none;
    height: 56px;
}

.rail-add {
    margin-top: -1px;
}

.rail-sep {
    width: 20px;
    height: 1px;
    margin: 16px 0 17px;
    background-color: #c4c7c5;
}

.rail-toggle {
    margin-top: auto;
    padding-bottom: 17px;
}

.cal-ico {
    display: flex;
    align-items: center;
    justify-content: center;
    width: 19px;
    height: 19px;
    border: 3px solid;
    border-color: #4285f4 #fbbc04 #34a853 #4285f4;
    border-radius: 2px;
    background-color: #ffffff;
    font-size: 8px;
    font-weight: 700;
    letter-spacing: 0;
    color: #1a73e8;
}

.scrim {
    position: absolute;
    left: 0;
    top: 0;
    right: 0;
    bottom: 0;
    background-color: rgba(0, 0, 0, .32);
}

.dialog {
    position: absolute;
    left: 256px;
    top: 56px;
    width: 722px;
    height: 471px;
    border-radius: 8px;
    background-color: #ffffff;
    box-shadow: 0 4px 8px 3px rgba(0, 0, 0, .15), 0 1px 3px rgba(0, 0, 0, .3);
}

.dialog-close {
    position: absolute;
    right: 22px;
    top: 22px;
    display: flex;
}

.dialog-scroll {
    position: absolute;
    right: 2px;
    top: 25px;
    width: 7px;
    height: 182px;
    border-radius: 4px;
    background-color: #c6c6c6;
}

.dialog-body {
    display: grid;
    grid-template-columns: 146px 1fr;
    row-gap: 20px;
    align-items: start;
    height: 390px;
    padding: 33px 33px 0 25px;
    overflow: hidden;
}

.form-label {
    margin: -1px 0;
    font-weight: 500;
    line-height: 44px;
    letter-spacing: .25px;
    color: #303030;
}

.field {
    display: flex;
    align-items: center;
    height: 42px;
    padding: 0 19px;
    border: 1px solid #747775;
    border-radius: 4px;
    letter-spacing: .17px;
    color: #444746;
}

.select {
    justify-content: space-between;
}

.select-text {
    flex: 1;
}

.select-focus {
    width: 256px;
    padding: 0 18px 0 15px;
    border: 2px solid #0b57d0;
}

.select-focus .select-text {
    margin-left: 15px;
}

.select-owner {
    flex: none;
    width: 249px;
}

.select-wide {
    width: 256px;
    padding-right: 19px;
}

.owner-row {
    display: flex;
    gap: 18px;
}

.owner-chip-box {
    flex: 1;
    padding: 0 0 0 23px;
}

.owner-chip {
    display: flex;
    align-items: center;
    width: 203px;
    height: 32px;
    padding-left: 7px;
    border: 1px solid #747775;
    border-radius: 16px;
    background-color: #f3f6fc;
}

.owner-avatar {
    display: flex;
    align-items: center;
    justify-content: center;
    width: 20px;
    height: 20px;
    border-radius: 50%;
    background-color: #5c6bc0;
    font-size: 11px;
    color: #ffffff;
}

.owner-mail {
    width: 152px;
    margin-left: 4px;
    font-weight: 500;
    color: #303030;
}

.dialog-foot {
    display: flex;
    align-items: center;
    height: 81px;
    padding: 11px 17px 0 29px;
}

.foot-link {
    font-weight: 500;
    letter-spacing: .2px;
    color: #0b57d0;
}

.foot-reset {
    margin-left: auto;
    letter-spacing: .35px;
}

.foot-btn {
    display: flex;
    align-items: center;
    justify-content: center;
    width: 185px;
    height: 40px;
    margin-left: 16px;
    border-radius: 20px;
    background-color: #0b57d0;
    font-weight: 500;
    letter-spacing: .35px;
    color: #ffffff;
}

/* windows taskbar */
.taskbar {
    display: flex;
    align-items: stretch;
    flex: none;
    height: 40px;
    background: linear-gradient(to right, #1f3742, #1e3340 45%, #1b2b45);
    font-size: 12px;
    color: #ffffff;
}

.start {
    display: flex;
    align-items: center;
    justify-content: center;
    width: 48px;
}

.task-search {
    display: flex;
    align-items: center;
    gap: 10px;
    width: 288px;
    padding: 1px 0 0 14px;
    border: 1px solid #c9c9c9;
    border-left: 0;
    background-color: #f1f1f1;
    font-size: 14px;
    color: #1f1f1f;
}

.task-slot {
    display: flex;
    align-items: center;
    justify-content: center;
    width: 45px;
}

.slot-view {
    width: 52px;
}

.slot-cam {
    width: 46px;
}

.sigma {
    display: flex;
    align-items: center;
    justify-content: center;
    width: 24px;
    height: 24px;
    border-radius: 50%;
    background-color: #3f7fb8;
    font-size: 14px;
}

.doc-ico {
    display: flex;
    align-items: center;
    justify-content: center;
    width: 20px;
    height: 24px;
    background-color: #c8dcec;
    border-top: 5px solid #3a78b8;
    font-size: 12px;
    font-weight: 700;
    color: #e3702c;
}

.task-app {
    display: flex;
    align-items: center;
    gap: 4px;
    padding-left: 3px;
    white-space: nowrap;
    border-bottom: 2px solid transparent;
}

.app-running {
    width: 111px;
    margin: 0 4px;
    border-bottom-color: #76b9ed;
}

.app-active {
    width: 119px;
    padding-left: 8px;
    background-color: #4c5b68;
    border-bottom-color: #76b9ed;
}

.app-teams {
    width: 119px;
    padding-left: 8px;
    background-color: #a0633a;
    border-bottom-color: #f7700c;
}

.chrome {
    position: relative;
    flex: none;
    width: 25px;
    height: 25px;
    border-radius: 50%;
    background:
        radial-gradient(circle, #4a90e2 0 5px, #ffffff 5.5px 7px, transparent 7.5px),
        conic-gradient(#ea4335 0 120deg, #fbbc04 120deg 210deg, #34a853 210deg 300deg, #ea4335 300deg);
}

.profile {
    position: absolute;
    right: -3px;
    bottom: -4px;
    display: flex;
    align-items: center;
    justify-content: center;
    width: 14px;
    height: 14px;
    border-radius: 50%;
    background-color: #a142c4;
    font-size: 8px;
    color: #ffffff;
}

.teams {
    position: relative;
    flex: none;
    width: 25px;
    height: 26px;
}

.teams-badge {
    position: absolute;
    right: -1px;
    bottom: -2px;
    display: flex;
    align-items: center;
    justify-content: center;
    width: 16px;
    height: 16px;
    border-radius: 50%;
    background-color: #c4281c;
    font-size: 10px;
    color: #ffffff;
}

.task-poll {
    display: flex;
    align-items: center;
    gap: 10px;
    width: 107px;
    padding-left: 21px;
    font-size: 14px;
}

.tray {
    display: flex;
    align-items: center;
    justify-content: center;
}

.tray-a { width: 24px; }
.tray-b { width: 25px; }
.tray-c { width: 23px; }
.tray-d { width: 24px; }
.tray-e { width: 21px; }
.tray-note { width: 38px; }

.clock {
    display: flex;
    flex-direction: column;
    align-items: center;
    justify-content: center;
    width: 74px;
    line-height: 18px;
}

.show-desktop {
    flex: 1;
    margin-left: 9px;
    border-left: 1px solid #8794a5;
}

.below {
    flex: 1;
    background-color: #ffffff;
}
```
